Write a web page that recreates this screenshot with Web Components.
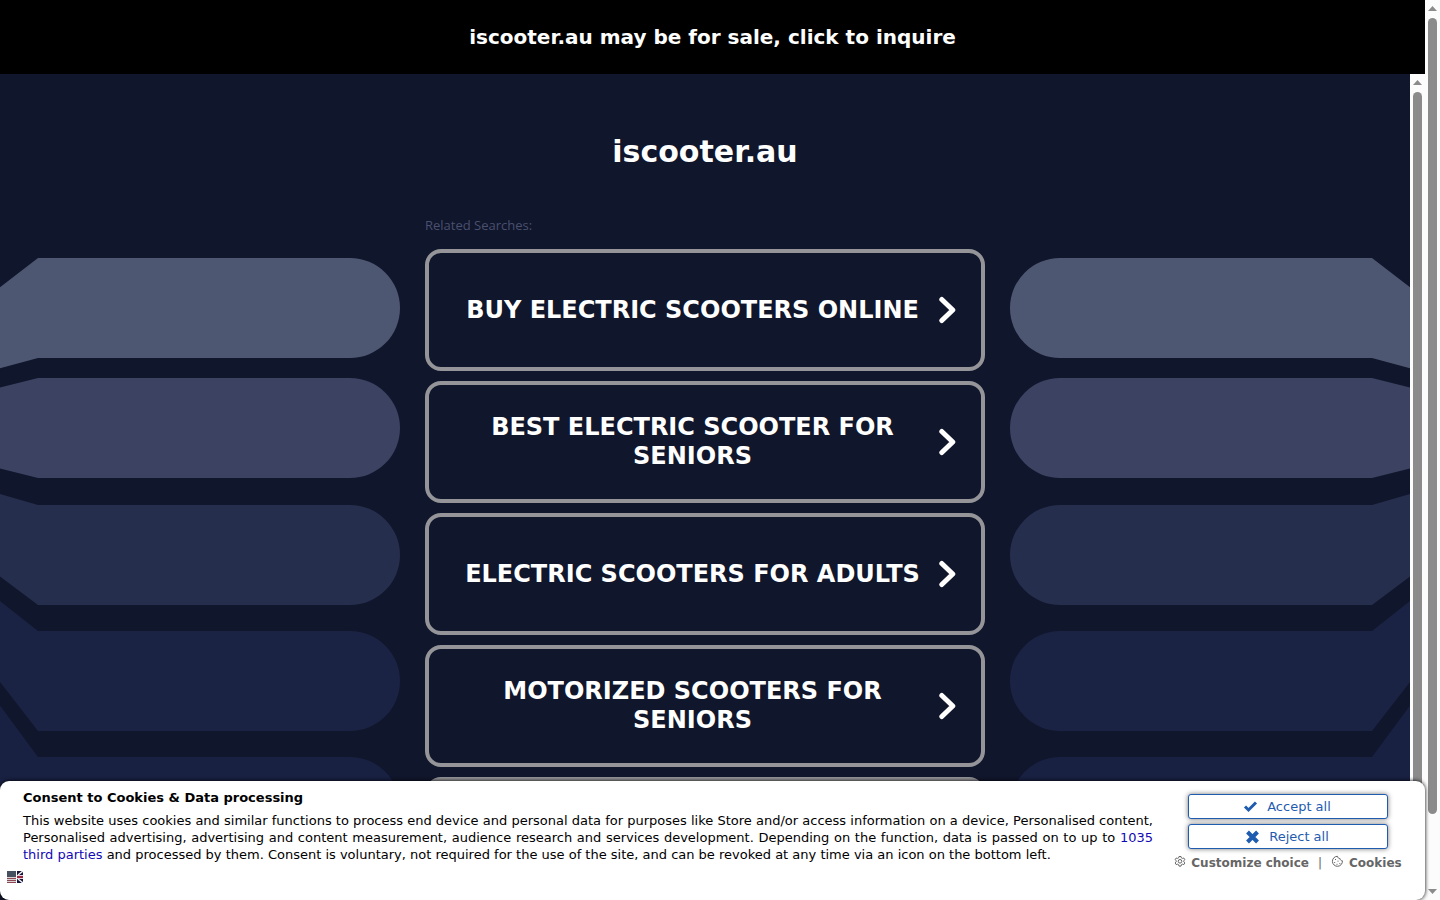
<!DOCTYPE html>
<html lang="en">
<head>
<meta charset="utf-8">
<title>iscooter.au</title>
<style>
html, body { margin: 0; height: 100%; overflow: hidden; }
body { font-family: "DejaVu Sans", sans-serif; background: #10162b; }
</style>
</head>
<body>
<parking-page></parking-page>
<script>
function define(name, html) {
  const template = document.createElement('template');
  template.innerHTML = html;
  customElements.define(name, class extends HTMLElement {
    constructor() {
      super();
      this.attachShadow({ mode: 'open' }).append(template.content.cloneNode(true));
    }
  });
}

define('scroll-track', `
<style>
:host { display: flex; flex-direction: column; align-items: center; box-sizing: border-box; flex: none; width: 15px; padding: 6px 0; background: #fcfcfc; }
svg { display: block; flex: none; fill: #8b8b8b; }
.rail { flex: 1; width: 9px; margin: 7px 0 6px; display: flex; flex-direction: column; }
.thumb { flex: 0 0 var(--thumb, 100%); border-radius: 5px; background: #8b8b8b; }
</style>
<svg width="9" height="5"><path d="M0 5 4.500 0 9 5z"/></svg>
<div class="rail"><div class="thumb"></div></div>
<svg width="9" height="5"><path d="M0 0H9L4.500 5z"/></svg>`);

define('sale-banner', `
<style>
:host { display: block; background: #000; text-align: center; }
a { display: block; padding: 25px 0; font-size: 20px; line-height: 24px; font-weight: bold; color: #fff; text-decoration: none; }
</style>
<a href="#inquire"><slot></slot></a>`);

define('side-arms', `
<style>
:host { display: block; height: 726px; overflow: hidden; }
svg { display: block; width: 400px; height: 726px; }
:host([mirrored]) svg { transform: scaleX(-1); }
</style>
<svg viewBox="0 0 400 726" aria-hidden="true">
<path fill="#4e5772" d="M-10 37 38 0H350a50 50 0 0 1 0 100H38L-10 113z"/>
<path fill="#3b4262" d="M-10 132 38 120H350a50 50 0 0 1 0 100H38L-10 208z"/>
<path fill="#262e4d" d="M-10 233 38 247H350a50 50 0 0 1 0 100H38L-10 311z"/>
<path fill="#1b2344" d="M-10 335 38 373H350a50 50 0 0 1 0 100H38L-10 411z"/>
<path fill="#192143" d="M-10 434 38 499H350a50 50 0 0 1 0 100H38L-10 530z"/>
</svg>`);

define('search-card', `
<style>
:host { display: block; }
a { display: flex; align-items: center; gap: 12px; box-sizing: border-box; min-height: 122px; padding: 0 24px 0 31px; border: 4px solid #949499; border-radius: 16px; color: #fff; text-decoration: none; }
span { flex: 1; text-align: center; font-size: 24px; line-height: 29px; font-weight: bold; text-transform: uppercase; }
svg { flex: none; }
</style>
<a href="#search"><span><slot></slot></span>
<svg width="20" height="28" viewBox="0 0 20 28" fill="none" stroke="#fff" stroke-width="5" stroke-linecap="round" stroke-linejoin="round" aria-hidden="true"><path d="M4.800 3.500 15.800 14 4.800 24.500"/></svg></a>`);

define('related-searches', `
<style>
:host { display: grid; grid-template-columns: 400px minmax(0, 1fr) 400px; align-items: start; flex: 1; min-width: 0; overflow: hidden; background: #10162b; }
side-arms { margin-top: 184px; }
main { box-sizing: border-box; width: 100%; max-width: 560px; margin: 0 auto; padding-top: 60px; }
h1 { margin: 0; font-size: 30px; line-height: 36px; text-align: center; color: #fff; }
h2 { margin: 46px 0 14px; font: 500 13px/19px "Open Sans", sans-serif; color: #4a506f; }
.list { display: grid; gap: 10px; }
</style>
<side-arms></side-arms>
<main>
<h1>iscooter.au</h1>
<h2>Related Searches:</h2>
<div class="list">
<search-card>Buy Electric Scooters Online</search-card>
<search-card>Best Electric Scooter for Seniors</search-card>
<search-card>Electric Scooters for Adults</search-card>
<search-card>Motorized Scooters for Seniors</search-card>
<search-card></search-card>
</div>
</main>
<side-arms mirrored></side-arms>`);

define('consent-button', `
<style>
:host { display: block; }
button { display: flex; align-items: center; justify-content: center; gap: 9px; box-sizing: border-box; width: 100%; height: 25px; padding: 0 2px 0 0; border: 1px solid #1f5cb0; border-radius: 3px; background: #fff; color: #1f5cb0; font: 13px/17px "DejaVu Sans", sans-serif; box-shadow: 0 0 5px #777; }
</style>
<button type="button"><slot name="icon"></slot><span><slot></slot></span></button>`);

define('consent-bar', `
<style>
:host { display: block; box-sizing: border-box; min-height: 119px; padding: 8px 22px 0 7px; border-radius: 9px; background: #fff; color: #000; box-shadow: 0 0 4px #000; font-size: 13px; line-height: 17px; }
.cols { display: grid; grid-template-columns: minmax(0, 1fr) 230px; gap: 20px; }
.copy { padding-left: 16px; }
h2 { margin: 0 0 6px; font-size: 13px; line-height: 17px; }
p { margin: 0; text-align: justify; }
.copy a { color: #1109b5; text-decoration: none; }
.actions { display: flex; flex-direction: column; align-items: center; gap: 5px; padding-top: 5px; }
consent-button { width: 200px; }
.links { display: flex; align-items: center; gap: 5px; padding-top: 1px; font-size: 12px; white-space: nowrap; color: #666; }
.links a { display: flex; align-items: flex-start; gap: 5px; font-weight: bold; color: #666; text-decoration: none; }
.links i { font-style: normal; padding: 0 4px; }
.flag { display: block; margin-top: -1px; padding: 0; border: 0; background: none; }
.flag svg { display: block; }
</style>
<div class="cols">
<section class="copy">
<h2>Consent to Cookies &amp; Data processing</h2>
<p>This website uses cookies and similar functions to process end device and personal data for purposes like Store and/or access information on a device, Personalised content, Personalised advertising, advertising and content measurement, audience research and services development. Depending on the function, data is passed on to up to <a href="#parties">1035 third parties</a> and processed by them. Consent is voluntary, not required for the use of the site, and can be revoked at any time via an icon on the bottom left.</p>
</section>
<section class="actions">
<consent-button><svg slot="icon" width="15" height="14" viewBox="0 0 15 14" fill="none" stroke="#1f5cb0" stroke-width="3"><path d="M2 6.500 5.500 10 13 2.500"/></svg>Accept all</consent-button>
<consent-button><svg slot="icon" width="15" height="14" viewBox="0 0 15 14" fill="none" stroke="#1f5cb0" stroke-width="4"><path d="M2.500 2 12.500 12M12.500 2 2.500 12"/></svg>Reject all</consent-button>
<div class="links">
<a href="#customize"><svg width="12" height="14" viewBox="0 0 12 14" fill="none" stroke="#666"><path d="M5 1.500h2l.4 1.400 1 .5 1.400-.4 1 1.700-1 1.100v1l1 1.100-1 1.700-1.400-.4-1 .5L7 11.100H5l-.4-1.400-1-.5-1.400.4-1-1.700 1-1.100v-1l-1-1.100 1-1.700 1.400.4 1-.5z"/><circle cx="6" cy="6.300" r="1.800"/></svg>Customize choice</a>
<i>|</i>
<a href="#cookies"><svg width="13" height="14" viewBox="0 0 13 14" fill="none" stroke="#666"><path d="M6.500 1.300C6.800 3 7.800 3.600 9 3.500c.1 1.400 1 2.200 2.400 2.300A5 5 0 1 1 6.500 1.300z"/><path d="M4 4.500h1M3.200 7.500h1M6.500 6.200h1M5.500 9.300h1M8.300 8.600h1"/></svg>Cookies</a>
</div>
</section>
</div>
<button class="flag" type="button" aria-label="Language">
<svg width="16" height="12" viewBox="0 0 16 12"><path fill="#d9d3d6" d="M0 0h9v12H0z"/><path stroke="#8d4853" d="M0 7.500h9M0 9.500h9M0 11.500h9"/><path fill="#46515f" d="M0 0h9v6H0z"/><path fill="#14123a" d="M10 0h6v12h-6z"/><path stroke="#eee" stroke-width="1.500" d="m11 4 5-4M11 8l5 4"/><path stroke="#e4d5dc" stroke-width="4" d="M10 6h6"/><path stroke="#9b2440" stroke-width="2" d="M10 6h6"/></svg>
</button>`);

define('parking-page', `
<style>
:host { display: flex; height: 100%; }
.view { flex: 1; min-width: 0; position: relative; display: flex; flex-direction: column; }
.frame { flex: 1; min-height: 0; display: flex; overflow: hidden; }
consent-bar { position: absolute; left: 0; right: 0; bottom: 0; }
.outer { --thumb: 92%; }
</style>
<div class="view">
<sale-banner>iscooter.au may be for sale, click to inquire</sale-banner>
<div class="frame"><related-searches></related-searches><scroll-track></scroll-track></div>
<consent-bar></consent-bar>
</div>
<scroll-track class="outer"></scroll-track>`);
</script>
</body>
</html>
